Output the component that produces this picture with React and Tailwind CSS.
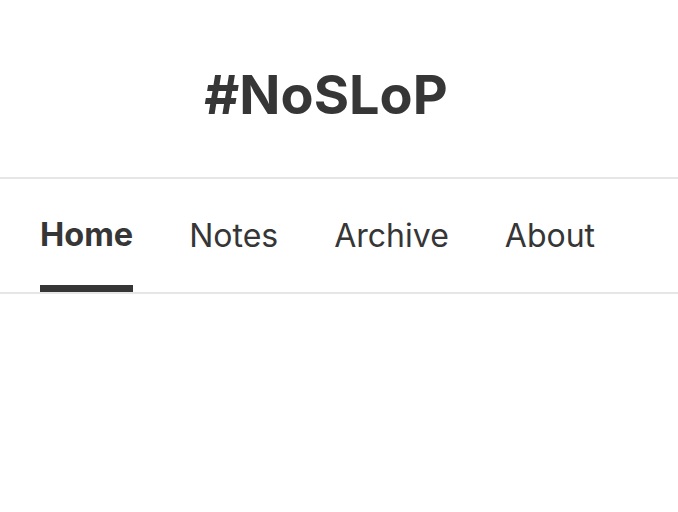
import React from 'react';

const tabs = ['Home', 'Notes', 'Archive', 'About'];

export default function App() {
  const active = 'Home';

  return (
    <div className="min-h-screen bg-white text-[#363636]" style={{ fontFamily: 'Inter, "Noto Sans", sans-serif' }}>
      <header className="h-[177px] flex items-center justify-center pr-[26px]">
        <h1 className="text-[54px] font-bold leading-none mt-[12px]">#NoSLoP</h1>
      </header>
      <nav className="border-t-2 border-b-2 border-[#e6e6e6]">
        <ul className="flex gap-[56px] pl-[40px] h-[113px]">
          {tabs.map((tab) => (
            <li key={tab} className="relative flex items-center">
              <span className={tab === active ? 'text-[32.5px] font-bold' : 'text-[32px] font-normal'}>{tab}</span>
              {tab === active && <span className="absolute left-0 right-0 bottom-0 h-[7px] bg-[#363636]" />}
            </li>
          ))}
        </ul>
      </nav>
    </div>
  );
}
